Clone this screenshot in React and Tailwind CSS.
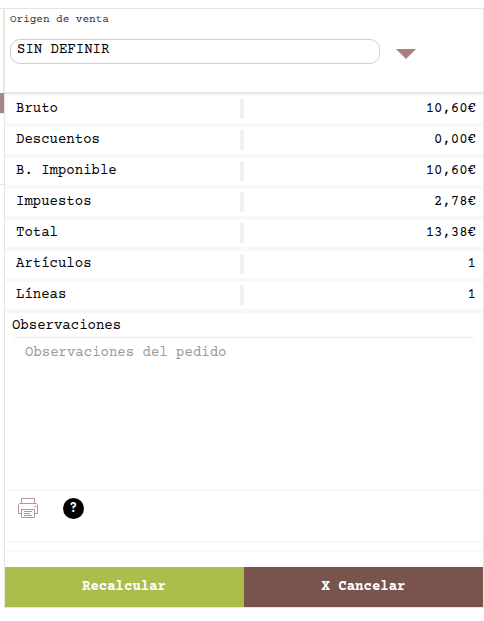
const rows = [
  ['Bruto', '10,60€'],
  ['Descuentos', '0,00€'],
  ['B. Imponible', '10,60€'],
  ['Impuestos', '2,78€'],
  ['Total', '13,38€'],
  ['Artículos', '1'],
  ['Líneas', '1'],
];

function Printer() {
  return (
    <svg width="21" height="21" viewBox="0 0 21 21" fill="none" stroke="#bd9292" strokeWidth="1" aria-hidden="true">
      <path d="M3.5 5.5v-5h13v5M3.5 15.5h-3v-9l1-1h17l1 1v9h-3M3.5 11.5h13v8h-13zM3 11.5h14M6 13.5h8M6 15.5h6M6 17.5h8" />
      <path d="M16.5 8.5h2" />
    </svg>
  );
}

export default function App() {
  return (
    <div className="flex h-[621px] w-[484px] overflow-hidden bg-white pt-2 font-['Courier_Prime','Liberation_Mono',monospace] text-[14px] leading-5 text-black">
      <div className="flex w-1 shrink-0 flex-col">
        <div className="h-[85px] border-t border-r border-[#e5e5e5]" />
        <div className="h-5 bg-[#a58689]" />
        <div className="h-[72px] border-y border-[#e8e8e8]" />
      </div>
      <main className="flex h-[600px] w-[480px] shrink-0 flex-col border border-[#e5e5e5]">
        <section className="h-[85px] shrink-0 border-b-2 border-[#e5e5e5] px-[5px]">
          <label className="block pt-[3px] text-[11px] leading-4 tracking-[-0.01px] text-[#333]">Origen de venta</label>
          <div className="mt-[11px] flex items-center">
            <div className="h-[25px] w-[370px] rounded-[10px] border border-[#d0d0d0] pl-[6px] leading-[21px]">SIN DEFINIR</div>
            <svg className="mt-1 ml-4" width="20" height="10" aria-hidden="true">
              <path d="M0 0h20L10 10z" fill="#ad7e7b" />
            </svg>
          </div>
        </section>
        <dl className="shrink-0">
          {rows.map(([label, value]) => (
            <div key={label} className="flex h-[31px] border-y-2 border-[#f8f8f8]">
              <dt className="my-[3px] h-5 w-[239px] border-r-4 border-[#f1f1f1] pl-[11px] leading-[21px]">{label}</dt>
              <dd className="my-[3px] h-5 flex-1 pr-[7px] text-right leading-[21px]">{value}</dd>
            </div>
          ))}
        </dl>
        <section className="flex h-[180px] shrink-0 flex-col border-y-2 border-[#f8f8f8]">
          <h2 className="h-6 pl-[7px] leading-[26px]">Observaciones</h2>
          <div className="mx-2 h-[148px] rounded-t border-t border-[#ececec] px-3 pt-[5px] text-[#999]">Observaciones del pedido</div>
        </section>
        <section className="flex h-[52px] shrink-0 gap-6 border-b-2 border-[#f8f8f8] pt-[7px] pl-[13px]">
          <Printer />
          <span className="flex size-[21px] items-center justify-center rounded-full bg-black text-[14px] font-bold text-white">?</span>
        </section>
        <div className="mt-[7px] h-[17px] shrink-0 border-t-2 border-[#f8f8f8]" />
        <div className="flex h-10 shrink-0 font-bold text-white">
          <button className="w-[239px] pr-px bg-[#abbe4b]">Recalcular</button>
          <button className="flex-1 bg-[#79544d]">X Cancelar</button>
        </div>
      </main>
    </div>
  );
}
